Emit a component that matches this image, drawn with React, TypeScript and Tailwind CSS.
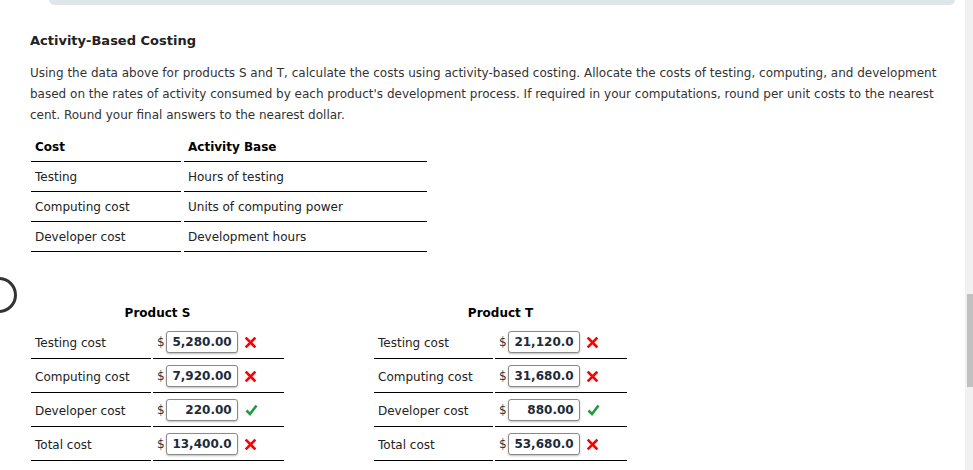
import React from "react";

const font = { fontFamily: '"DejaVu Sans", Verdana, sans-serif' };

const bases = [
  { cost: "Testing", base: "Hours of testing" },
  { cost: "Computing cost", base: "Units of computing power" },
  { cost: "Developer cost", base: "Development hours" },
];

type Row = { label: string; value: string; ok: boolean };

const productS: Row[] = [
  { label: "Testing cost", value: "5,280.00", ok: false },
  { label: "Computing cost", value: "7,920.00", ok: false },
  { label: "Developer cost", value: "220.00", ok: true },
  { label: "Total cost", value: "13,400.0", ok: false },
];

const productT: Row[] = [
  { label: "Testing cost", value: "21,120.0", ok: false },
  { label: "Computing cost", value: "31,680.0", ok: false },
  { label: "Developer cost", value: "880.00", ok: true },
  { label: "Total cost", value: "53,680.0", ok: false },
];

function Wrong() {
  return (
    <svg width="11" height="11" viewBox="0 0 11 11" className="shrink-0">
      <path d="M1.5 1.5 L9.5 9.5 M9.5 1.5 L1.5 9.5" stroke="#f00" strokeWidth="2.6" strokeLinecap="square" />
    </svg>
  );
}

function Right() {
  return (
    <svg width="13" height="12" viewBox="0 0 13 12" className="shrink-0">
      <path d="M1.5 6.5 L5 10 L11.5 1.5" stroke="#1f9d3a" strokeWidth="2.6" fill="none" />
    </svg>
  );
}

function Product({ title, rows, wide }: { title: string; rows: Row[]; wide: boolean }) {
  return (
    <div className="flex flex-col">
      <div className="h-[24px] flex items-center justify-center font-bold text-black">{title}</div>
      <div className={`grid gap-x-[2px] ${wide ? "grid-cols-[120px_131px]" : "grid-cols-[119px_132px]"}`}>
        {rows.map((r) => (
          <React.Fragment key={r.label}>
            <div className="h-[34px] border-b border-black flex items-center pl-[4px] pt-[2px] text-[#222]">{r.label}</div>
            <div className="h-[34px] border-b border-black flex items-center pl-[4px] pt-[1px]">
              <span className="text-[#333]">$</span>
              <div className="w-[72px] h-[22px] ml-[1px] border border-[#8a8a8a] rounded-[3px] shadow-[0_1px_2px_rgba(0,0,0,0.25)] flex items-center justify-end pr-[5px] font-bold text-[#1d2b3a] overflow-hidden whitespace-nowrap bg-white">
                {r.value}
              </div>
              <div className="ml-[7px] flex items-center">{r.ok ? <Right /> : <Wrong />}</div>
            </div>
          </React.Fragment>
        ))}
      </div>
    </div>
  );
}

export default function App() {
  return (
    <div className="flex w-[973px] h-[470px] overflow-hidden bg-white text-[12px] text-[#333]" style={font}>
      <div className="relative flex-1">
        <div className="ml-[49px] w-[906px] h-[5px] bg-[#dfe6e9] rounded-b-[6px]" />
        <div className="absolute left-[-19px] top-[277px] w-[36px] h-[36px] rounded-full border-[3px] border-[#333]" />
        <div className="pl-[30px] pr-[20px]">
          <h2 className="mt-[27px] text-[13px] font-bold text-[#222] leading-[18px]">Activity-Based Costing</h2>
          <p className="mt-[13px] leading-[21px] text-[#333] w-[915px]">
            Using the data above for products S and T, calculate the costs using activity-based costing. Allocate the costs of testing, computing, and development based on the rates of activity consumed by each product's development process. If required in your computations, round per unit costs to the nearest cent. Round your final answers to the nearest dollar.
          </p>
          <div className="mt-[6px] ml-[1px] grid grid-cols-[150px_243px] gap-x-[3px]">
            <div className="h-[30px] border-b border-black flex items-center pl-[4px] font-bold text-black">Cost</div>
            <div className="h-[30px] border-b border-black flex items-center pl-[4px] font-bold text-black">Activity Base</div>
            {bases.map((b) => (
              <React.Fragment key={b.cost}>
                <div className="h-[30px] border-b border-black flex items-center pl-[4px] text-[#222]">{b.cost}</div>
                <div className="h-[30px] border-b border-black flex items-center pl-[4px] text-[#222]">{b.base}</div>
              </React.Fragment>
            ))}
          </div>
          <div className="mt-[49px] ml-[1px] flex gap-x-[90px]">
            <Product title="Product S" rows={productS} wide />
            <Product title="Product T" rows={productT} wide={false} />
          </div>
        </div>
      </div>
      <div className="w-[13px] h-full bg-[#f1f1f1] pl-[2px]">
        <div className="mt-[294px] h-[93px] bg-[#c1c1c1]" />
      </div>
    </div>
  );
}
